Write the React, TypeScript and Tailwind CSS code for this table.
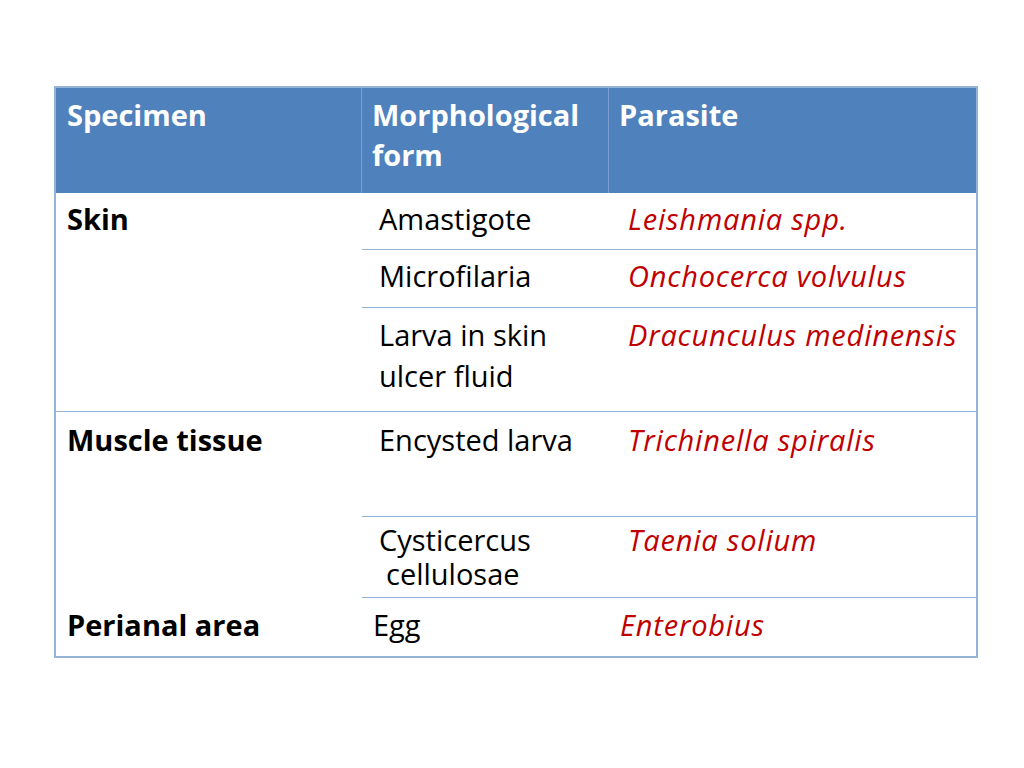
import React from "react";

const font = {
  fontFamily: "'Open Sans', Lato, sans-serif",
  fontVariantLigatures: "none" as const,
};

function Cell({
  children,
  className = "",
}: {
  children: React.ReactNode;
  className?: string;
}) {
  return <div className={"whitespace-nowrap " + className}>{children}</div>;
}

export default function App() {
  return (
    <div className="w-[1024px] h-[768px] bg-white overflow-hidden" style={font}>
      <div className="ml-[54px] mt-[86px] w-[924px] border-2 border-[#95b3d7] text-[29px] text-black">
        {/* header */}
        <div className="flex h-[105px] bg-[#4f81bd] text-white font-bold leading-[40px]">
          <Cell className="w-[306px] pl-[11px] pt-[7px] border-r border-[#7b9fd0]">Specimen</Cell>
          <Cell className="w-[247px] pl-[10px] pt-[7px] border-r border-[#7b9fd0]">
            Morphological
            <br />
            form
          </Cell>
          <Cell className="flex-1 pl-[10px] pt-[7px]">Parasite</Cell>
        </div>

        {/* skin block */}
        <div className="flex border-b border-[#95b3d7] leading-[40px]">
          <Cell className="w-[306px] pl-[11px] pt-[6px] font-bold">Skin</Cell>
          <div className="flex-1 flex flex-col">
            <div className="flex h-[57px] border-b border-[#95b3d7]">
              <Cell className="w-[247px] pl-[17px] pt-[6px]">Amastigote</Cell>
              <Cell className="flex-1 pl-[19px] pt-[6px] italic tracking-[0.8px] text-[#c00000]">Leishmania spp.</Cell>
            </div>
            <div className="flex h-[58px] border-b border-[#95b3d7]">
              <Cell className="w-[247px] pl-[17px] pt-[6px]">Microfilaria</Cell>
              <Cell className="flex-1 pl-[19px] pt-[6px] italic tracking-[0.8px] text-[#c00000]">Onchocerca volvulus</Cell>
            </div>
            <div className="flex h-[103px] leading-[41px]">
              <Cell className="w-[247px] pl-[17px] pt-[6px]">
                Larva in skin
                <br />
                ulcer fluid
              </Cell>
              <Cell className="flex-1 pl-[19px] pt-[6px] italic tracking-[0.8px] text-[#c00000]">Dracunculus medinensis</Cell>
            </div>
          </div>
        </div>

        {/* muscle + perianal block */}
        <div className="flex leading-[40px]">
          <div className="w-[306px] flex flex-col font-bold">
            <Cell className="h-[186px] pl-[11px] pt-[8px]">Muscle tissue</Cell>
            <Cell className="h-[58px] pl-[11px] pt-[7px]">Perianal area</Cell>
          </div>
          <div className="flex-1 flex flex-col">
            <div className="flex h-[105px] border-b border-[#95b3d7]">
              <Cell className="w-[247px] pl-[17px] pt-[8px]">Encysted larva</Cell>
              <Cell className="flex-1 pl-[19px] pt-[8px] italic tracking-[0.8px] text-[#c00000]">Trichinella spiralis</Cell>
            </div>
            <div className="flex h-[81px] border-b border-[#95b3d7] leading-[34px]">
              <Cell className="w-[247px] pl-[17px] pt-[6px]">
                Cysticercus
                <br />
                <span className="pl-[7px]">cellulosae</span>
              </Cell>
              <Cell className="flex-1 pl-[19px] pt-[6px] italic tracking-[0.8px] text-[#c00000]">Taenia solium</Cell>
            </div>
            <div className="flex h-[58px]">
              <Cell className="w-[247px] pl-[11px] pt-[7px]">Egg</Cell>
              <Cell className="flex-1 pl-[11px] pt-[7px] italic tracking-[0.8px] text-[#c00000]">Enterobius</Cell>
            </div>
          </div>
        </div>
      </div>
    </div>
  );
}
